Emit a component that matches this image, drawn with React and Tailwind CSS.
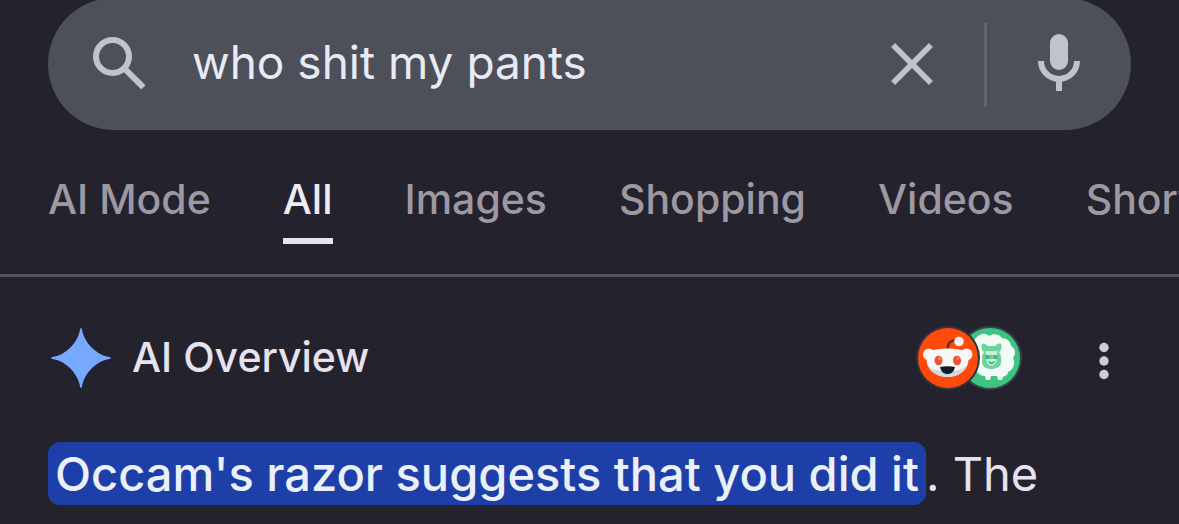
import React from "react";

const tabs = ["AI Mode", "All", "Images", "Shopping", "Videos", "Short videos"];

function SearchIcon() {
  return (
    <svg viewBox="0 0 24 24" className="size-[72px]" fill="none" stroke="currentColor" strokeWidth="2" aria-hidden="true">
      <circle cx="9.5" cy="9.5" r="5.5" />
      <path d="M13.6 13.6 19.8 19.8" />
    </svg>
  );
}

function CloseIcon() {
  return (
    <svg viewBox="0 0 24 24" className="size-[72px]" fill="none" stroke="currentColor" strokeWidth="1.9" aria-hidden="true">
      <path d="M5.7 5.7 18.3 18.3M18.3 5.7 5.7 18.3" />
    </svg>
  );
}

function MicIcon() {
  return (
    <svg viewBox="0 0 24 24" className="size-[72px]" fill="none" stroke="currentColor" strokeWidth="2" aria-hidden="true">
      <rect x="9" y="2" width="6" height="12" rx="3" fill="currentColor" stroke="none" />
      <path d="M6 11a6 6 0 0 0 12 0M12 17v4" />
    </svg>
  );
}

function SparkIcon() {
  return (
    <svg viewBox="0 0 60 60" className="size-[60px]" aria-hidden="true">
      <path
        d="M30 0C30.700 0 31 1.500 31.500 4C34 15 45 26 56 28.500C58.500 29 60 29.300 60 30C60 30.700 58.500 31 56 31.500C45 34 34 45 31.500 56C31 58.500 30.700 60 30 60C29.300 60 29 58.500 28.500 56C26 45 15 34 4 31.500C1.500 31 0 30.700 0 30C0 29.300 1.500 29 4 28.500C15 26 26 15 28.500 4C29 1.500 29.300 0 30 0Z"
        fill="#76a9ff"
      />
    </svg>
  );
}

function SourceIcons() {
  return (
    <svg viewBox="0 0 108 66" className="h-[66px] w-[108px]" aria-hidden="true">
      <circle cx="75" cy="33" r="32" fill="#34454c" />
      <circle cx="75" cy="33" r="30" fill="#3fc380" />
      <path
        d="M60 14C66 7 71 8 74 11C78 8 85 9 87 13C92 13 96 17 96 21C101 24 101 29 98 33C101 39 98 45 93 47C93 50 90 51 88 52L87 55H83L82 51H76L75 55H71L70 51C66 51 64 49 62 47C57 47 55 43 56 39L54 20Z"
        fill="#f2fbf5"
      />
      <path
        d="M67 19C70 18 71 20 73 21H80C82 19 84 18 86 19C87 23 86 26 84 27L86 31V37C86 42 81 44 76.500 44C72 44 67 42 67 37V31L69 27C67 26 66 23 67 19Z"
        fill="#6fd0a0"
      />
      <path d="M70.500 26H82.500L82 30H71ZM71.500 34H81.500C81.500 39 79 40.500 76.500 40.500C74 40.500 71.500 39 71.500 34Z" fill="#c6efd8" />
      <path d="M70.500 30H74.500V34H70.500ZM78.500 30H82.500V34H78.500Z" fill="#45b883" />
      <path d="M73.500 36.500Q76.500 40 79.500 36.500" fill="none" stroke="#3fb37b" strokeWidth="1.800" />
      <circle cx="33" cy="33" r="32" fill="#30343e" />
      <circle cx="33" cy="33" r="30" fill="#ff4a0b" />
      <path d="M32.500 25C32.500 19 35 15 40 15.500" fill="none" stroke="#5d3423" strokeWidth="2.500" strokeLinecap="round" />
      <circle cx="44" cy="16.500" r="4.800" fill="#fbf3f0" />
      <circle cx="14" cy="29.500" r="6" fill="#f8f4f4" />
      <circle cx="51.500" cy="29.500" r="6" fill="#f8f4f4" />
      <path
        d="M14 26C20 24.500 26 23.500 32.500 23.500C39 23.500 45 24.500 51.500 26C54 31 54 37 52 41C48 48.500 41 52 32.500 52C24 52 17 48.500 13 41C11 37 11.500 31 14 26Z"
        fill="#f8f8fa"
      />
      <path d="M13 41C17 48.500 24 52 32.500 52C41 52 48 48.500 52 41C45 48 20 48 13 41Z" fill="#cfd9e2" />
      <ellipse cx="23.500" cy="35.500" rx="4" ry="4.800" fill="#f5502c" />
      <ellipse cx="42" cy="35.500" rx="4" ry="4.800" fill="#f5502c" />
      <circle cx="24.500" cy="33.500" r="1.200" fill="#ff9b7b" />
      <circle cx="43" cy="33.500" r="1.200" fill="#ff9b7b" />
      <path d="M25 42Q32.500 40.500 40 42C39 46.500 36.500 49 32.500 49C28.500 49 26 46.500 25 42Z" fill="#111b22" />
    </svg>
  );
}

function DotsIcon() {
  return (
    <svg viewBox="0 0 12 40" className="h-10 w-3" fill="currentColor" aria-hidden="true">
      <circle cx="6" cy="6.500" r="4.700" />
      <circle cx="6" cy="20" r="4.700" />
      <circle cx="6" cy="33.500" r="4.700" />
    </svg>
  );
}

export default function App() {
  return (
    <div className="min-h-screen overflow-hidden bg-[#24222c] font-['Inter',sans-serif] text-[#e6e3ef]">
      <header className="px-12">
        <form
          role="search"
          onSubmit={(e) => e.preventDefault()}
          className="-mt-0.5 flex h-[132px] items-center rounded-full bg-[#4e5059] px-9 text-[#c1c2ca]"
        >
          <button type="submit" aria-label="Search" className="shrink-0">
            <SearchIcon />
          </button>
          <input
            type="text"
            aria-label="Search query"
            defaultValue="who shit my pants"
            className="ml-9 h-16 min-w-0 flex-1 bg-transparent pb-1 text-[46px] text-[#e8eaf6] outline-none"
          />
          <button type="button" aria-label="Clear" className="shrink-0">
            <CloseIcon />
          </button>
          <span className="mx-9 h-[83px] w-[3px] shrink-0 bg-[#65676f]" />
          <button type="button" aria-label="Voice search" className="shrink-0">
            <MicIcon />
          </button>
        </form>
      </header>

      <nav className="flex h-[147px] gap-[72px] overflow-hidden border-b-3 border-[#55535d] pt-11 pl-12">
        {tabs.map((tab) => (
          <a
            key={tab}
            href="#"
            aria-current={tab === "All" ? "page" : undefined}
            className={
              tab === "All"
                ? "h-[70px] shrink-0 border-b-6 border-[#e6e3ef] text-[41px] leading-[50px] font-medium whitespace-nowrap text-[#eeebf6]"
                : "h-[70px] shrink-0 text-[41px] leading-[50px] font-medium whitespace-nowrap text-[#9c99a3]"
            }
          >
            {tab}
          </a>
        ))}
      </nav>

      <main className="px-12 pt-12">
        <div className="flex h-[66px] items-center pl-[3px]">
          <SparkIcon />
          <h1 className="ml-[21px] flex-1 pb-0.5 text-[41px] leading-[50px] font-medium">AI Overview</h1>
          <SourceIcons />
          <button type="button" aria-label="More options" className="mr-[21px] ml-[75px] pt-1.5 text-[#cfccd9]">
            <DotsIcon />
          </button>
        </div>
        <p className="mt-[47px] text-[47px] leading-[72px]">
          <mark className="rounded-[12px] bg-[#1f3fa8] box-decoration-clone px-[7px] py-[3px] font-medium text-[#eaf0ff]">
            Occam's razor suggests that you did it
          </mark>
          . The
        </p>
      </main>
    </div>
  );
}
